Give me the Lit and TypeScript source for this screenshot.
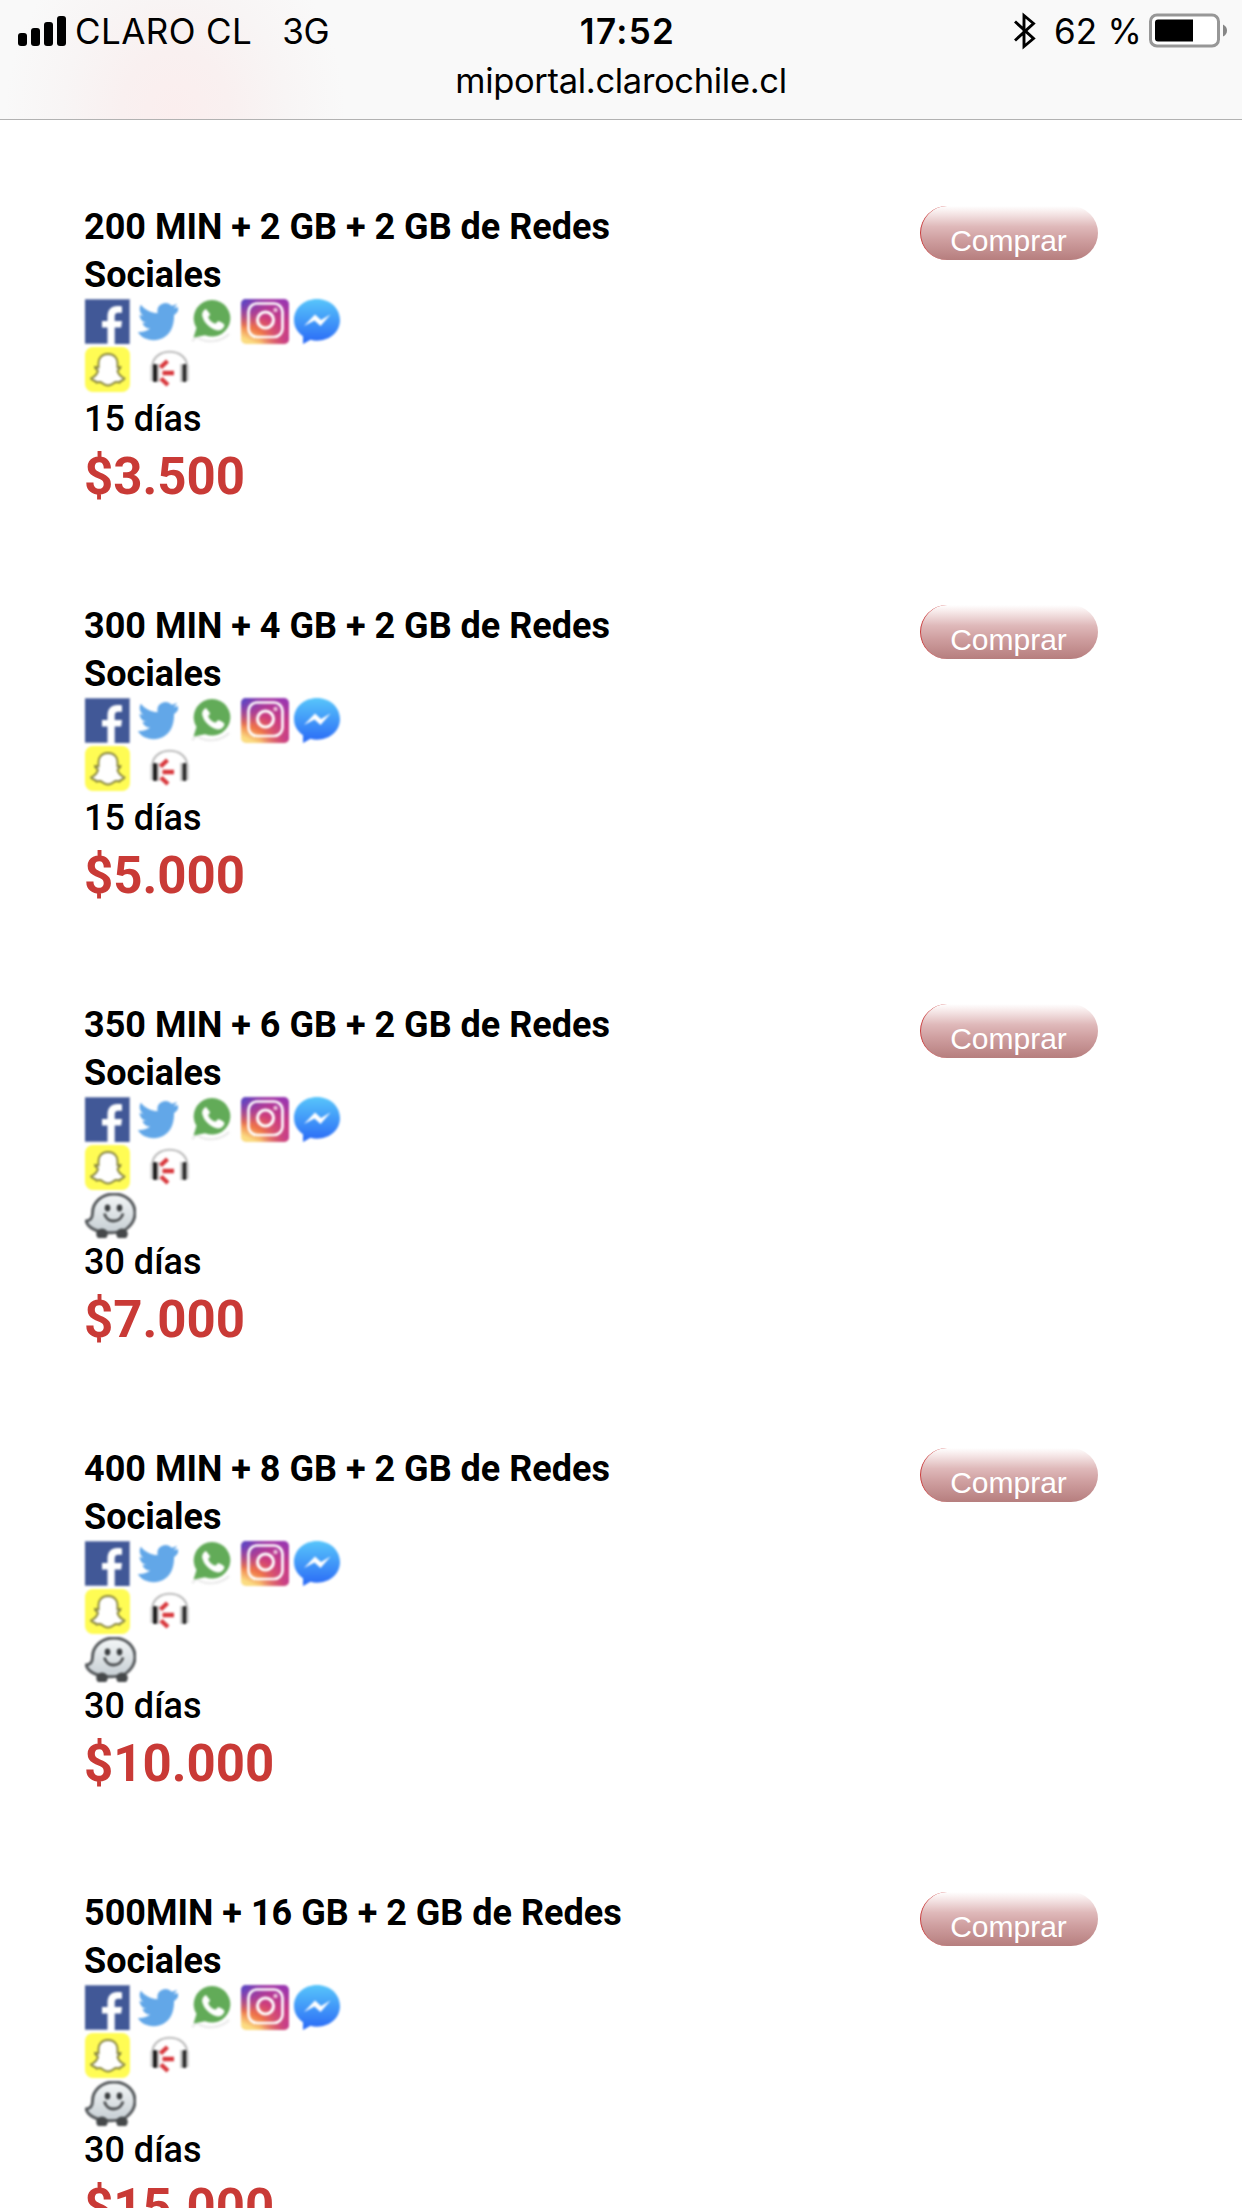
import { LitElement, html, svg, css, nothing } from "lit";
import { customElement, property } from "lit/decorators.js";

const art: Record<string, { w: number; body: unknown }> = {
  facebook: {
    w: 45,
    body: svg`<rect width="45" height="45" fill="#415897"/>
      <path d="M0 .5H45M44.500 0V45M0 44.500H24" stroke="#7d8dba" fill="none"/>
      <path d="M22.500 45V28.500h-5.500v-6.500h5.500v-4.500C22.500 10.500 26.500 7 32 7c2 0 4 .2 5 .4v6.300h-3.500c-3 0-3.800 1.600-3.800 4V22H37l-.8 6.500h-6.500V45z" fill="#fff"/>`,
  },
  twitter: {
    w: 45,
    body: svg`<path d="M43.500 8.500c-1.500.7-3 1.100-4.700 1.300 1.700-1 3-2.600 3.600-4.500-1.600.9-3.300 1.600-5.200 2A8.200 8.200 0 0 0 23.200 14.800C16.400 14.500 10.400 11.200 6.300 6.200c-2.200 3.800-1.100 8.600 2.500 11-1.300 0-2.600-.4-3.700-1 0 3.900 2.700 7.300 6.600 8.100-1.200.3-2.500.4-3.700.1 1 3.300 4.100 5.600 7.700 5.700-3.400 2.700-7.700 3.900-12.200 3.400C7.200 41 21 45.500 31.500 37.500c6-4.500 8.300-13 8-20.800 1.600-1.200 3-2.600 4-4.200z" transform="translate(-2.500 -.5)" fill="#62a7e8"/>`,
  },
  whatsapp: {
    w: 45,
    body: svg`<path d="M2 42l5-4c8 6 23 6 32-3" fill="none" stroke="#ececec" stroke-width="2.500"/>
      <path d="M3.500 38.500l3-9.500A18.300 18.300 0 1 1 15 36.200z" fill="#62ab58"/>
      <path d="M16 10.500c-2 .5-3.800 3-3.200 6.500 1.300 7 8.500 13 15 14 3.200.2 6-1.800 6.200-5.200-1.300-1.600-4-2.800-5.800-3.200-1.300.6-1.800 2.400-3 2.600-3.200-1-6.100-3.600-7.400-6.700.2-1.300 1.700-2 1.800-3.200z" fill="#fff" stroke="#fff"/>`,
  },
  instagram: {
    w: 48,
    body: svg`<defs>
        <linearGradient id="ig" x1="0.8" y1="0" x2="0.3" y2="1">
          <stop offset="0" stop-color="#9a36b0"/><stop offset=".45" stop-color="#cf3d7c"/>
          <stop offset=".75" stop-color="#ef7648"/><stop offset="1" stop-color="#fbdc82"/>
        </linearGradient>
        <radialGradient id="igb" cx="0" cy="0" r=".65">
          <stop offset="0" stop-color="#4a49cc"/><stop offset="1" stop-color="#7a3cc0" stop-opacity="0"/>
        </radialGradient>
        <radialGradient id="igr" cx="1" cy=".9" r=".6">
          <stop offset="0" stop-color="#c43a8e"/><stop offset="1" stop-color="#c43a8e" stop-opacity="0"/>
        </radialGradient>
      </defs>
      <rect width="48" height="45" rx="5" fill="url(#ig)"/>
      <rect width="48" height="45" rx="5" fill="url(#igb)"/>
      <rect width="48" height="45" rx="5" fill="url(#igr)"/>
      <rect x="7.500" y="4.500" width="34" height="33.500" rx="8.500" fill="none" stroke="#fff" stroke-width="2.700"/>
      <circle cx="24.500" cy="21" r="8" fill="none" stroke="#fff" stroke-width="3.100"/>
      <circle cx="34.500" cy="11" r="2.200" fill="#eec0da"/>`,
  },
  messenger: {
    w: 46,
    body: svg`<defs><linearGradient id="ms" x1="0" y1="0" x2="0" y2="1">
        <stop offset="0" stop-color="#58c6fb"/><stop offset="1" stop-color="#2a69f6"/>
      </linearGradient></defs>
      <path d="M23 0C10 0 0 9 0 21c0 7 3.500 12.500 9 16.200V45l7.500-4.200c2 .6 4.200.9 6.500.9 13 0 23-9 23-20.700S36 0 23 0z" fill="url(#ms)"/>
      <path d="M10 27l11-11.500 6 5.500 9.500-5.500L26.500 27l-6-5.500z" fill="#fff"/>`,
  },
  snapchat: {
    w: 45,
    body: svg`<rect width="45" height="45" rx="8" fill="#fffc54"/>
      <path d="M23 7c-6 0-9.500 4-9.500 9v4.500l-3.500-.5c0 2 3 3 3 4-1 3.500-4 6-7 7.500 1 2.500 4.500 1.500 5.500 4 2.500-.8 4.500-.5 6 .8 3.500 2.800 7.500 2.800 11 0 1.500-1.300 3.500-1.600 6-.8 1-2.500 4-1.500 5-4-3-1.500-6-4-7-7.500 0-1 3-2 3-4l-3 .5V16c0-5-3.500-9-9.500-9z" fill="#fff" stroke="#85833c" stroke-width="1.900"/>`,
  },
  music: {
    w: 45,
    body: svg`<path d="M4.500 19C5 0 38.500 0 39 19" fill="none" stroke="#bdbdbd" stroke-width="2.200"/>
      <rect x="2.500" y="18" width="2" height="16" fill="#c4c4c4"/>
      <rect x="5" y="17" width="4" height="18" rx="1.500" fill="#1a1a1a"/>
      <rect x="9.200" y="17" width="2" height="18" fill="#b9aeae"/>
      <rect x="34.500" y="17" width="4" height="18" rx="1.500" fill="#222"/>
      <rect x="38.700" y="18" width="2" height="16" fill="#c4c4c4"/>
      <rect x="32.300" y="17" width="2" height="18" fill="#bbb"/>
      <path d="M12.500 20.500L19.500 14M14.500 26h11.500M13 31.500l7 6.500" stroke="#d8373c" stroke-width="4.400"/>`,
  },
  waze: {
    w: 51,
    body: svg`<defs><linearGradient id="wz" x1="0" y1="0" x2="0" y2="1">
        <stop offset="0" stop-color="#f4f7f8"/><stop offset="1" stop-color="#c6ced3"/>
      </linearGradient></defs>
      <path d="M29 1C17 1 7.500 9 7.500 20c0 5-2 7.500-6.500 8 1.500 5.500 6 8.500 13 10.500 8 2 22 2 28-3C47 31.500 50 26 50 20 50 9 41 1 29 1z" fill="url(#wz)" stroke="#55595c" stroke-width="2.900"/>
      <ellipse cx="17" cy="41" rx="5.800" ry="5.500" fill="#45484a"/>
      <ellipse cx="37" cy="41" rx="5.800" ry="5.500" fill="#45484a"/>
      <ellipse cx="22.500" cy="15" rx="2.800" ry="3.400" fill="#3b3e40"/>
      <ellipse cx="34.500" cy="15" rx="2.800" ry="3.400" fill="#3b3e40"/>
      <path d="M19.500 20.500c2 10 16 10 18.500 0" fill="none" stroke="#4c4f51" stroke-width="2.900"/>`,
  },
};

@customElement("app-icon")
export class AppIcon extends LitElement {
  @property() name = "facebook";
  static styles = css`
    :host { display: block; height: 45px; }
    svg { display: block; filter: blur(0.8px); }
  `;
  render() {
    const { w, body } = art[this.name];
    return html`<svg width=${w} height="45" viewBox="0 0 ${w} 45">${body}</svg>`;
  }
}

@customElement("status-bar")
export class StatusBar extends LitElement {
  static styles = css`
    :host {
      display: block; box-sizing: border-box; height: 120px;
      border-bottom: 1px solid #b2b2b2; color: #000;
      font-family: Inter, "Liberation Sans", sans-serif;
      background: radial-gradient(ellipse 170px 190px at 175px 112px, #fbeeee 0, #f9f0f0 32%, #f8f5f5 66%, #f9f9f9 100%) #f9f9f9;
    }
    .row { display: grid; grid-template-columns: 1fr auto 1fr; height: 62px; padding: 0 14px 0 18px; align-items: center; }
    .side { display: flex; align-items: center; white-space: pre; }
    .right { justify-content: flex-end; }
    .carrier { margin-left: 9px; font-size: 35px; letter-spacing: 0.4px; }
    .net { margin-left: 30px; font-size: 35px; letter-spacing: -0.2px; }
    .time { padding-left: 9px; font-size: 35px; font-weight: 600; letter-spacing: 1.3px; }
    .pct { margin: 0 7px 0 18px; font-size: 35px; letter-spacing: 0.2px; }
    .url { text-align: center; font-size: 34.5px; line-height: 38px; letter-spacing: -0.32px; }
    svg { display: block; flex: none; }
  `;
  render() {
    return html`
      <div class="row">
        <div class="side">
          <svg width="48" height="33" viewBox="0 0 48 33">
            <rect y="18" width="9" height="13" rx="3"/><rect x="13" y="13" width="9" height="18" rx="3"/>
            <rect x="26" y="7" width="9" height="24" rx="3"/><rect x="39" y="1" width="9" height="30" rx="3"/>
          </svg>
          <span class="carrier">CLARO CL</span><span class="net">3G</span>
        </div>
        <span class="time">17:52</span>
        <div class="side right">
          <svg width="22" height="38" viewBox="0 0 22 38">
            <path d="M1 9.500l18.500 17L10 34.500V3.500l9.500 8L1 28.500" fill="none" stroke="#000" stroke-width="2.900"/>
          </svg>
          <span class="pct">62 %</span>
          <svg width="79" height="36" viewBox="0 0 79 36">
            <rect x="1.500" y="2" width="68" height="31" rx="6.500" fill="#fff" stroke="#979797" stroke-width="3"/>
            <path d="M9 6.500h35v22H9q-3 0-3-3v-16q0-3 3-3z"/>
            <path d="M74 11.500q4 2 4 6t-4 6z" fill="#868686"/>
          </svg>
        </div>
      </div>
      <div class="url">miportal.clarochile.cl</div>
    `;
  }
}

@customElement("plan-card")
export class PlanCard extends LitElement {
  @property() name = "";
  @property() days = "";
  @property() price = "";
  @property({ type: Boolean }) waze = false;
  static styles = css`
    :host {
      display: flex; justify-content: space-between; align-items: flex-start;
      font-family: Roboto, "Liberation Sans", sans-serif; color: #000;
    }
    .info { width: 560px; }
    .title { font-size: 36px; font-weight: 700; line-height: 48px; }
    .title span { display: block; white-space: nowrap; }
    .icons { display: flex; height: 48px; padding-left: 1px; }
    .apps { gap: 7px; }
    .extra { gap: 18px; }
    .last { height: 45px; }
    .wa { margin-left: 1px; }
    .ig { margin-left: -1px; }
    .ms { margin-left: -2px; }
    .days { font-size: 36px; font-weight: 500; line-height: 48px; }
    .price { font-size: 51px; font-weight: 700; line-height: 68px; color: #c93a36; }
    .buy {
      box-sizing: border-box; width: 178px; height: 54px; margin: 3px 0 0; padding: 16px 2px 0 0;
      border: 0; border-left: 1px solid #c83c3c; border-radius: 27px;
      background: linear-gradient(#fff 0, #f7eaea 12%, #dfb9ba 38%, #cf9fa0 62%, #b67e7e 100%);
      font: 30px/38px "Liberation Sans", Arial, sans-serif; color: #fff; text-align: center;
    }
  `;
  render() {
    return html`
      <div class="info">
        <div class="title"><span>${this.name}</span><span>Sociales</span></div>
        <div class="icons apps">
          <app-icon name="facebook"></app-icon><app-icon name="twitter"></app-icon>
          <app-icon class="wa" name="whatsapp"></app-icon><app-icon class="ig" name="instagram"></app-icon>
          <app-icon class="ms" name="messenger"></app-icon>
        </div>
        <div class="icons extra"><app-icon name="snapchat"></app-icon><app-icon name="music"></app-icon></div>
        ${this.waze ? html`<div class="icons last"><app-icon name="waze"></app-icon></div>` : nothing}
        <div class="days">${this.days}</div>
        <div class="price">${this.price}</div>
      </div>
      <button class="buy">Comprar</button>
    `;
  }
}

const plans = [
  { name: "200 MIN + 2 GB + 2 GB de Redes", days: "15 días", price: "$3.500", waze: false },
  { name: "300 MIN + 4 GB + 2 GB de Redes", days: "15 días", price: "$5.000", waze: false },
  { name: "350 MIN + 6 GB + 2 GB de Redes", days: "30 días", price: "$7.000", waze: true },
  { name: "400 MIN + 8 GB + 2 GB de Redes", days: "30 días", price: "$10.000", waze: true },
  { name: "500MIN + 16 GB + 2 GB de Redes", days: "30 días", price: "$15.000", waze: true },
];

@customElement("app-root")
export class AppRoot extends LitElement {
  static styles = css`
    :host { display: block; width: 1242px; height: 2208px; overflow: hidden; background: #fff; }
    .plans { display: flex; flex-direction: column; gap: 91px; padding: 83px 144px 0 84px; }
  `;
  render() {
    return html`
      <status-bar></status-bar>
      <main class="plans">
        ${plans.map((p) => html`<plan-card name=${p.name} days=${p.days} price=${p.price} ?waze=${p.waze}></plan-card>`)}
      </main>
    `;
  }
}
